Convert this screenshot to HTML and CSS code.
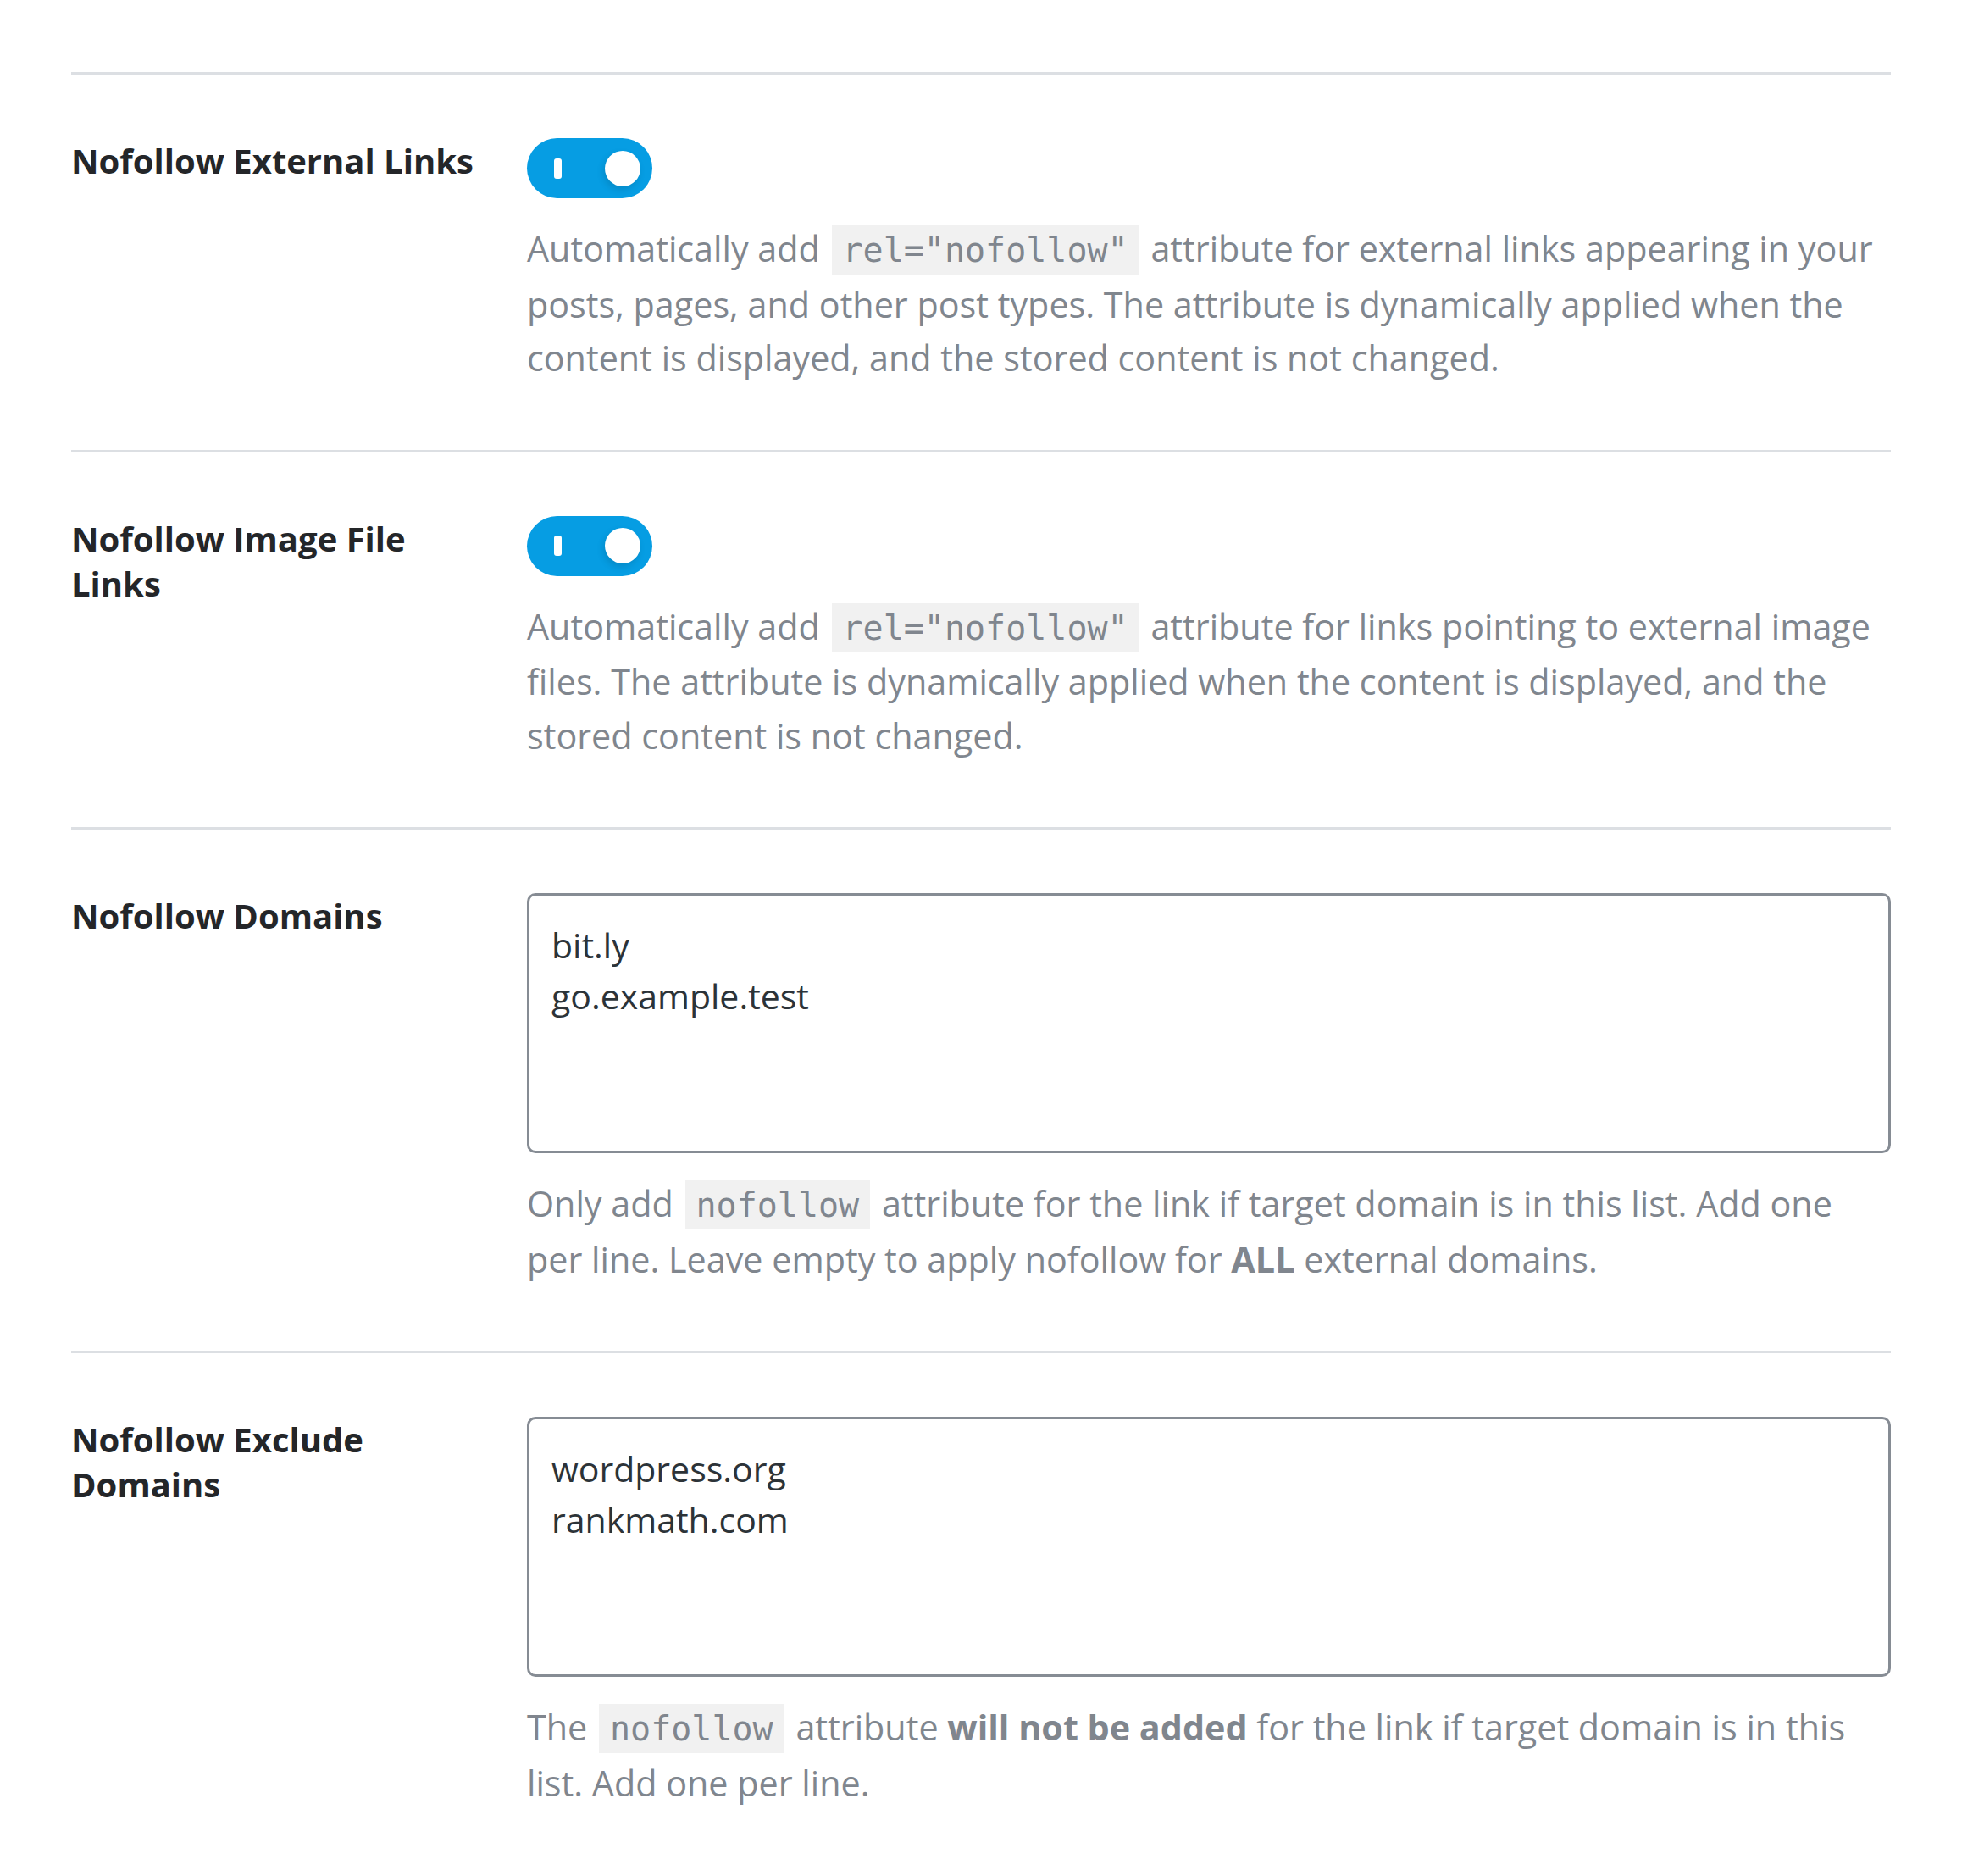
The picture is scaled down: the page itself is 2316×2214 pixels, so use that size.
FILE: index.html
```html
<!DOCTYPE html>
<html lang="en">
<head>
    <meta charset="UTF-8">
    <meta name="viewport" content="width=device-width, initial-scale=1.0">
    <title>Links - Nofollow Settings</title>
    <link rel="stylesheet" href="styles.css">
</head>
<body>
    <div class="settings">
        <div class="field">
            <div class="field-label">
                <label for="nofollowExternal">Nofollow External Links</label>
            </div>
            <div class="field-body">
                <label class="switch">
                    <input type="checkbox" id="nofollowExternal" checked>
                    <span class="switch-track"><span class="switch-knob"></span></span>
                </label>
                <p class="field-desc">Automatically add <code>rel="nofollow"</code> attribute for external links appearing in your posts, pages, and other post types. The attribute is dynamically applied when the content is displayed, and the stored content is not changed.</p>
            </div>
        </div>

        <div class="field">
            <div class="field-label">
                <label for="nofollowImages">Nofollow Image File Links</label>
            </div>
            <div class="field-body">
                <label class="switch">
                    <input type="checkbox" id="nofollowImages" checked>
                    <span class="switch-track"><span class="switch-knob"></span></span>
                </label>
                <p class="field-desc">Automatically add <code>rel="nofollow"</code> attribute for links pointing to external image files. The attribute is dynamically applied when the content is displayed, and the stored content is not changed.</p>
            </div>
        </div>

        <div class="field">
            <div class="field-label">
                <label for="nofollowDomains">Nofollow Domains</label>
            </div>
            <div class="field-body">
                <textarea id="nofollowDomains" class="field-textarea">bit.ly
go.example.test</textarea>
                <p class="field-desc">Only add <code>nofollow</code> attribute for the link if target domain is in this list. Add one per line. Leave empty to apply nofollow for <strong>ALL</strong> external domains.</p>
            </div>
        </div>

        <div class="field">
            <div class="field-label">
                <label for="nofollowExclude">Nofollow Exclude Domains</label>
            </div>
            <div class="field-body">
                <textarea id="nofollowExclude" class="field-textarea">wordpress.org
rankmath.com</textarea>
                <p class="field-desc">The <code>nofollow</code> attribute <strong>will not be added</strong> for the link if target domain is in this list. Add one per line.</p>
            </div>
        </div>
    </div>
</body>
</html>
```

FILE: styles.css
```css
body {
    font-family: 'Open Sans', Lato, sans-serif;
    margin: 0;
    padding: 85px 84px 0;
    background: #fff;
}
.field {
    display: grid;
    grid-template-columns: 538px 1fr;
    border-top: 3px solid #dcdfe3;
    padding: 75px 0 76px;
}
.field-label {
    padding-right: 48px;
}
.field-label label {
    font-size: 40px;
    font-weight: 700;
    line-height: 53px;
    color: #242629;
}
.field-body {
    min-width: 0;
}

/* toggle switch */
.switch {
    display: block;
    width: 148px;
    cursor: pointer;
}
.switch input {
    display: none;
}
.switch-track {
    display: flex;
    align-items: center;
    justify-content: space-between;
    height: 71px;
    padding: 0 14px 0 32px;
    border-radius: 36px;
    background-color: #069de3;
    box-sizing: border-box;
}
.switch-track::before {
    content: "";
    width: 9px;
    height: 24px;
    border-radius: 3px;
    background: #fff;
}
.switch-knob {
    width: 42px;
    height: 42px;
    border-radius: 50%;
    background: #fff;
    box-shadow: -2px 4px 8px rgba(0,0,0,0.12);
}

.field-desc {
    margin: 28px 0 0;
    font-size: 41.3px;
    line-height: 63.5px;
    color: #80868e;
}
.field-desc strong {
    font-weight: 700;
}
.field-desc code {
    font-family: 'DejaVu Sans Mono', monospace;
    font-size: 40px;
    padding: 6px 13px;
    margin: 0 3px;
    background-color: #f1f1f1;
}

.field-textarea {
    display: block;
    width: 100%;
    height: 307px;
    box-sizing: border-box;
    padding: 28px 26px;
    border: 3px solid #868c94;
    border-radius: 10px;
    font-family: 'Open Sans', Lato, sans-serif;
    font-size: 41px;
    line-height: 60px;
    color: #2c3338;
    resize: none;
    overflow: hidden;
}
```
